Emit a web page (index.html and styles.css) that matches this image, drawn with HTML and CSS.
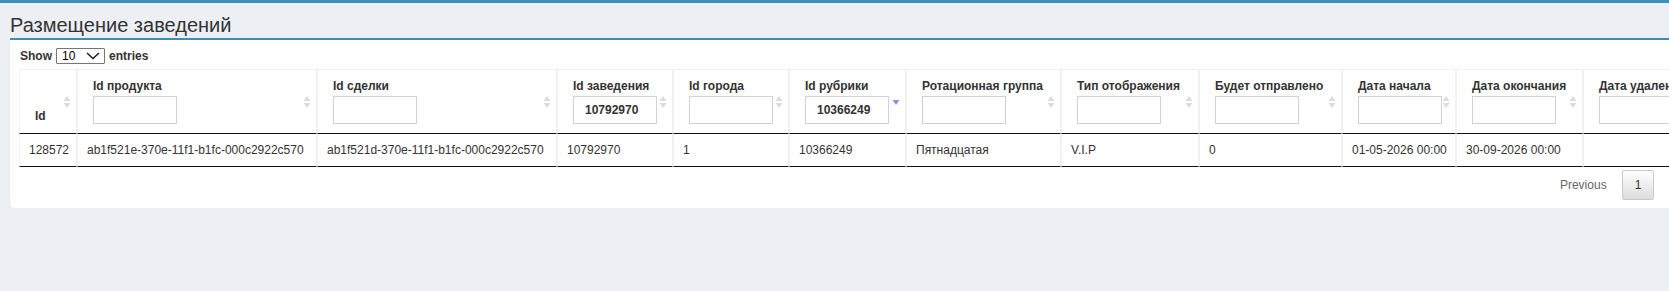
FILE: index.html
```html
<!DOCTYPE html>
<html lang="ru">
<head>
<meta charset="utf-8">
<title>Размещение заведений</title>
<link rel="stylesheet" href="styles.css">
</head>
<body>
<div class="topbar"></div>
<div class="content">
  <h1 class="page-title">Размещение заведений</h1>
  <div class="box">
    <div class="length">
      <span>Show</span>
      <span class="select"><span class="select-val">10</span><svg class="chev" width="14" height="8" viewBox="0 0 14 8"><path d="M1 1 L7 6.5 L13 1" fill="none" stroke="#222" stroke-width="1.6"/></svg></span>
      <span>entries</span>
    </div>
    <table class="grid">
      <colgroup>
        <col style="width:58px"><col style="width:240px"><col style="width:240px"><col style="width:116px"><col style="width:116px"><col style="width:117px"><col style="width:155px"><col style="width:138px"><col style="width:143px"><col style="width:114px"><col style="width:127px"><col style="width:124px">
      </colgroup>
      <thead>
        <tr>
          <th class="th-id"><span class="lbl">Id</span><i class="sort"><svg width="8" height="14" viewBox="0 0 8 14"><path d="M4 1 L7.5 6 H0.5 Z M4 13 L7.5 8 H0.5 Z" fill="#dcdcdc"/></svg></i></th>
          <th><span class="lbl">Id продукта</span><span class="filter"></span><i class="sort"><svg width="8" height="14" viewBox="0 0 8 14"><path d="M4 1 L7.5 6 H0.5 Z M4 13 L7.5 8 H0.5 Z" fill="#dcdcdc"/></svg></i></th>
          <th><span class="lbl">Id сделки</span><span class="filter"></span><i class="sort"><svg width="8" height="14" viewBox="0 0 8 14"><path d="M4 1 L7.5 6 H0.5 Z M4 13 L7.5 8 H0.5 Z" fill="#dcdcdc"/></svg></i></th>
          <th><span class="lbl">Id заведения</span><span class="filter">10792970</span><i class="sort"><svg width="8" height="14" viewBox="0 0 8 14"><path d="M4 1 L7.5 6 H0.5 Z M4 13 L7.5 8 H0.5 Z" fill="#dcdcdc"/></svg></i></th>
          <th><span class="lbl">Id города</span><span class="filter"></span><i class="sort"><svg width="8" height="14" viewBox="0 0 8 14"><path d="M4 1 L7.5 6 H0.5 Z M4 13 L7.5 8 H0.5 Z" fill="#dcdcdc"/></svg></i></th>
          <th><span class="lbl">Id рубрики</span><span class="filter">10366249</span><i class="sort"><svg width="8" height="14" viewBox="0 0 8 14"><path d="M4 10 L7.5 5 H0.5 Z" fill="#8b8fdc"/></svg></i></th>
          <th><span class="lbl">Ротационная группа</span><span class="filter"></span><i class="sort"><svg width="8" height="14" viewBox="0 0 8 14"><path d="M4 1 L7.5 6 H0.5 Z M4 13 L7.5 8 H0.5 Z" fill="#dcdcdc"/></svg></i></th>
          <th><span class="lbl">Тип отображения</span><span class="filter"></span><i class="sort"><svg width="8" height="14" viewBox="0 0 8 14"><path d="M4 1 L7.5 6 H0.5 Z M4 13 L7.5 8 H0.5 Z" fill="#dcdcdc"/></svg></i></th>
          <th><span class="lbl">Будет отправлено</span><span class="filter"></span><i class="sort"><svg width="8" height="14" viewBox="0 0 8 14"><path d="M4 1 L7.5 6 H0.5 Z M4 13 L7.5 8 H0.5 Z" fill="#dcdcdc"/></svg></i></th>
          <th><span class="lbl">Дата начала</span><span class="filter"></span><i class="sort"><svg width="8" height="14" viewBox="0 0 8 14"><path d="M4 1 L7.5 6 H0.5 Z M4 13 L7.5 8 H0.5 Z" fill="#dcdcdc"/></svg></i></th>
          <th><span class="lbl">Дата окончания</span><span class="filter"></span><i class="sort"><svg width="8" height="14" viewBox="0 0 8 14"><path d="M4 1 L7.5 6 H0.5 Z M4 13 L7.5 8 H0.5 Z" fill="#dcdcdc"/></svg></i></th>
          <th><span class="lbl">Дата удаления</span><span class="filter"></span><i class="sort"><svg width="8" height="14" viewBox="0 0 8 14"><path d="M4 1 L7.5 6 H0.5 Z M4 13 L7.5 8 H0.5 Z" fill="#dcdcdc"/></svg></i></th>
        </tr>
      </thead>
      <tbody>
        <tr>
          <td>128572</td>
          <td>ab1f521e-370e-11f1-b1fc-000c2922c570</td>
          <td>ab1f521d-370e-11f1-b1fc-000c2922c570</td>
          <td>10792970</td>
          <td>1</td>
          <td>10366249</td>
          <td>Пятнадцатая</td>
          <td>V.I.P</td>
          <td>0</td>
          <td>01-05-2026 00:00</td>
          <td>30-09-2026 00:00</td>
          <td></td>
        </tr>
      </tbody>
    </table>
    <div class="paging">
      <span class="pbtn disabled">Previous</span>
      <span class="pbtn current">1</span>
      <span class="pbtn disabled">Next</span>
    </div>
  </div>
</div>
</body>
</html>
```

FILE: styles.css
```css
html, body {
  overflow: hidden;
}
body {
  margin: 0;
  background: #ecf0f5;
  font-family: "Liberation Sans", Arial, sans-serif;
  color: #333;
}
.topbar {
  height: 3px;
  background: #3c8dbc;
}
.content {
  padding-left: 10px;
}
.page-title {
  margin: 11px 0 2px 0;
  font-size: 20px;
  line-height: 22px;
  font-weight: normal;
  color: #333;
}
.box {
  width: max-content;
  background: #fff;
  border-top: 2px solid #3c8dbc;
  border-radius: 0 0 3px 3px;
  box-shadow: 0 1px 1px rgba(0, 0, 0, 0.12);
  padding: 8px 9px 8px 9px;
}
.length {
  display: flex;
  align-items: center;
  gap: 4px;
  height: 16px;
  font-size: 12px;
  font-weight: bold;
  padding-left: 1px;
}
.select {
  display: inline-flex;
  align-items: center;
  justify-content: space-between;
  box-sizing: border-box;
  width: 49px;
  height: 16px;
  border: 1px solid #767676;
  border-radius: 1px;
  padding: 0 4px 0 5px;
  font-weight: normal;
  font-size: 12px;
  color: #000;
}
.grid {
  margin-top: 5px;
  border-collapse: separate;
  border-spacing: 0;
  table-layout: fixed;
  width: 1688px;
  font-size: 12px;
}
.grid th, .grid td {
  border-left: 1px solid #f2f2f2;
  border-right: 1px solid #f2f2f2;
  text-align: left;
}
.grid th {
  position: relative;
  border-top: 1px solid #f2f2f2;
  border-bottom: 1px solid #111;
  padding: 9px 18px 9px 15px;
  vertical-align: bottom;
  font-weight: bold;
  white-space: nowrap;
}
.lbl {
  display: block;
  line-height: 15px;
}
.filter {
  display: block;
  box-sizing: border-box;
  width: 84px;
  height: 28px;
  margin-top: 2px;
  border: 1px solid #cfd2da;
  padding: 0 0 0 11px;
  line-height: 26px;
  font-weight: bold;
  font-size: 12px;
  color: #333;
}
.sort {
  position: absolute;
  right: 5px;
  top: 50%;
  margin-top: -7px;
  width: 8px;
  height: 14px;
  line-height: 0;
}
.grid td {
  padding: 8px 9px;
  line-height: 16px;
  border-bottom: 1px solid #111;
  white-space: nowrap;
}
.paging {
  display: flex;
  justify-content: flex-end;
  margin-top: 3px;
  font-size: 12px;
}
.pbtn {
  box-sizing: border-box;
  padding: 6px 12px;
  line-height: 16px;
  margin-left: 2px;
  border: 1px solid transparent;
  border-radius: 2px;
  color: #666;
}
.pbtn.current {
  color: #333;
  border: 1px solid #cacaca;
  background: linear-gradient(to bottom, #fff 0%, #dcdcdc 100%);
}
```
